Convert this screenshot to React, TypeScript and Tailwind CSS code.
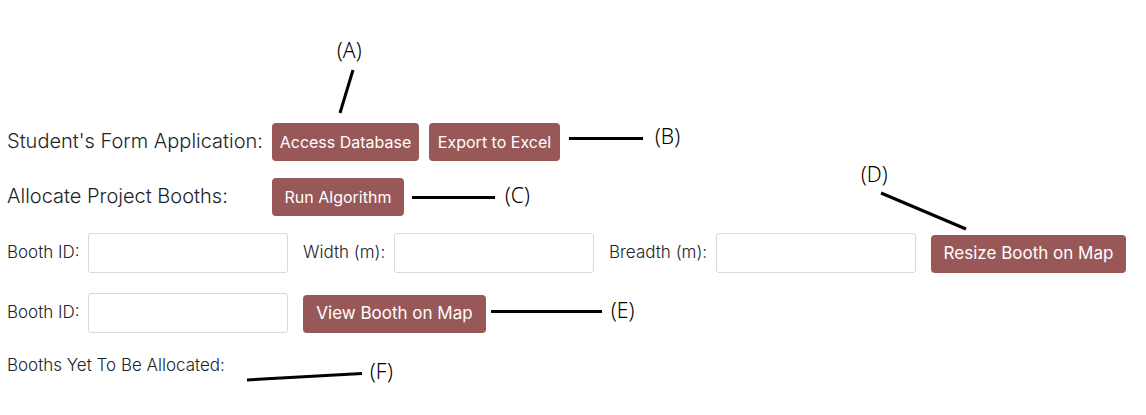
import type { ReactNode } from "react";

type Callout = {
  letter: string;
  place: string;
  line: [number, number, number, number];
};

const callouts: Callout[] = [
  { letter: "A", place: "left-[337px] top-[36px]", line: [353, 70, 340, 113] },
  { letter: "B", place: "left-[655px] top-[122px]", line: [569, 138.5, 643, 138.5] },
  { letter: "C", place: "left-[505px] top-[181px]", line: [412, 197.5, 495, 197.5] },
  { letter: "D", place: "left-[861px] top-[160px]", line: [881, 193, 966, 229] },
  { letter: "E", place: "left-[611px] top-[296px]", line: [491, 311.5, 602, 311.5] },
  { letter: "F", place: "left-[370px] top-[357px]", line: [247, 380, 362, 373.5] },
];

function Button({ width, size, children }: { width: string; size: string; children: ReactNode }) {
  return (
    <button
      type="button"
      className={`h-[38px] shrink-0 whitespace-nowrap rounded bg-[#985858] text-white ${width} ${size}`}
    >
      {children}
    </button>
  );
}

function Field({ id, label, width }: { id: string; label: string; width: string }) {
  return (
    <div className="flex shrink-0 items-center">
      <label htmlFor={id} className={`shrink-0 whitespace-nowrap text-[17px] font-light ${width}`}>
        {label}
      </label>
      <input id={id} type="text" className="h-10 w-[200px] rounded-[3px] border border-[#d5dadb] bg-white px-3" />
    </div>
  );
}

export default function App() {
  return (
    <div className="relative min-h-screen bg-white font-['Inter',sans-serif] text-[#212529]">
      <main className="flex flex-col px-[7px] pt-[123px]">
        <div className="flex items-center">
          <span className="w-[265px] shrink-0 whitespace-nowrap pb-[2px] text-[20px] font-light">
            Student's Form Application:
          </span>
          <div className="flex gap-[10px]">
            <Button width="w-[147px]" size="text-[16px]">Access Database</Button>
            <Button width="w-[131px]" size="text-[16px]">Export to Excel</Button>
          </div>
        </div>
        <div className="mt-[17px] flex items-center">
          <span className="w-[265px] shrink-0 whitespace-nowrap pb-[2px] text-[20px] font-light">
            Allocate Project Booths:
          </span>
          <Button width="w-[132px]" size="text-[16px]">Run Algorithm</Button>
        </div>
        <form className="mt-[17px] flex items-end gap-[15px]">
          <Field id="resize-booth" label="Booth ID:" width="w-[81px]" />
          <Field id="booth-width" label="Width (m):" width="w-[91px]" />
          <Field id="booth-breadth" label="Breadth (m):" width="w-[107px]" />
          <Button width="w-[195px]" size="text-[17px]">Resize Booth on Map</Button>
        </form>
        <form className="mt-5 flex items-end gap-[15px]">
          <Field id="view-booth" label="Booth ID:" width="w-[81px]" />
          <Button width="w-[183px]" size="text-[17px]">View Booth on Map</Button>
        </form>
        <p className="mt-5 text-[17px] font-light">Booths Yet To Be Allocated:</p>
      </main>

      <svg
        className="pointer-events-none absolute left-0 top-0 h-[415px] w-[1146px]"
        viewBox="0 0 1146 415"
        stroke="#000"
        strokeWidth="3"
        aria-hidden="true"
      >
        {callouts.map(({ letter, line: [x1, y1, x2, y2] }) => (
          <line key={letter} x1={x1} y1={y1} x2={x2} y2={y2} />
        ))}
      </svg>
      {callouts.map(({ letter, place }) => (
        <span
          key={letter}
          className={`absolute font-['Noto_Sans',sans-serif] text-[21px] font-light leading-7 text-black ${place}`}
        >
          ({letter})
        </span>
      ))}
    </div>
  );
}
